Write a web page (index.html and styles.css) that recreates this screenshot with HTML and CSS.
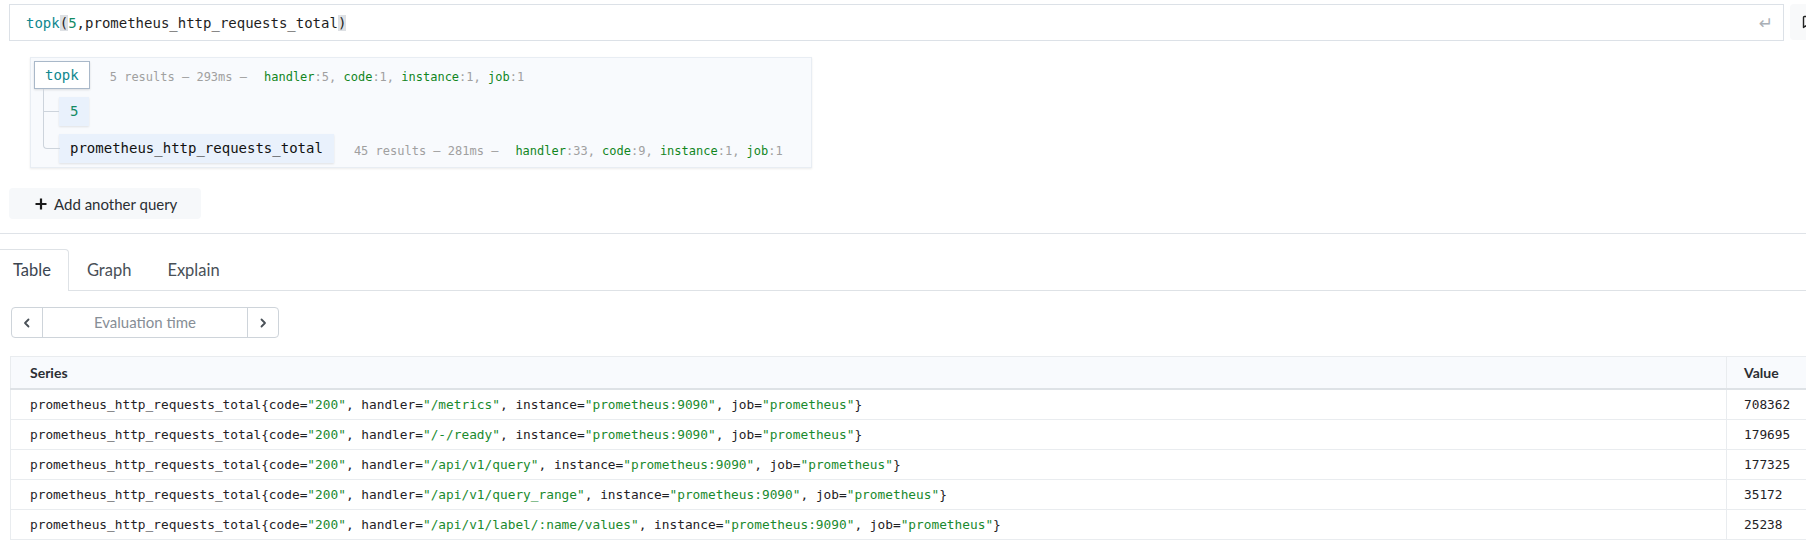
FILE: index.html
```html
<!DOCTYPE html>
<html>
<head>
<meta charset="utf-8">
<link rel="stylesheet" href="styles.css">
</head>
<body>
<div class="page">
  <section class="top">
    <div class="query-row">
      <div class="query-input">
        <span class="q-fn">topk</span><span class="q-brk">(</span><span class="q-num">5</span><span class="q-plain">,prometheus_http_requests_total</span><span class="q-brk">)</span>
        <span class="q-enter">↵</span>
      </div>
      <div class="side-btn">
        <svg width="16" height="16" viewBox="0 0 16 16"><path d="M12 2.5H4.5a1 1 0 0 0-1 1v10l2-1.6 2 1.6" fill="none" stroke="#222" stroke-width="1.4" stroke-linejoin="round"/></svg>
      </div>
    </div>

    <div class="tree">
      <div class="node-row">
        <span class="node node-root">topk</span>
        <span class="info">5 results – 293ms –<span class="labels"><span class="ln">handler</span>:5, <span class="ln">code</span>:1, <span class="ln">instance</span>:1, <span class="ln">job</span>:1</span></span>
      </div>
      <div class="children">
        <div class="child">
          <span class="node node-leaf num">5</span>
        </div>
        <div class="child last">
          <span class="node node-leaf">prometheus_http_requests_total</span>
          <span class="info">45 results – 281ms –<span class="labels"><span class="ln">handler</span>:33, <span class="ln">code</span>:9, <span class="ln">instance</span>:1, <span class="ln">job</span>:1</span></span>
        </div>
      </div>
    </div>

    <button class="add-btn"><svg width="12" height="12" viewBox="0 0 12 12"><path d="M6 0.5v11M0.5 6h11" stroke="#1b1b1b" stroke-width="2.2"/></svg><span>Add another query</span></button>
  </section>

  <hr class="sep">

  <section class="bottom">
    <div class="tabs">
      <div class="tab active">Table</div>
      <div class="tab">Graph</div>
      <div class="tab">Explain</div>
    </div>

    <div class="eval">
      <div class="eval-btn"><svg width="12" height="12" viewBox="0 0 12 12"><path d="M7.5 2.5L4 6l3.5 3.5" fill="none" stroke="#495057" stroke-width="1.8" stroke-linecap="round" stroke-linejoin="round"/></svg></div>
      <div class="eval-field">Evaluation time</div>
      <div class="eval-btn"><svg width="12" height="12" viewBox="0 0 12 12"><path d="M4.5 2.5L8 6l-3.5 3.5" fill="none" stroke="#495057" stroke-width="1.8" stroke-linecap="round" stroke-linejoin="round"/></svg></div>
    </div>

    <table class="results">
      <thead>
        <tr><th class="c-series">Series</th><th class="c-value">Value</th></tr>
      </thead>
      <tbody>
        <tr><td class="c-series">prometheus_http_requests_total{code=<span class="lv">"200"</span>, handler=<span class="lv">"/metrics"</span>, instance=<span class="lv">"prometheus:9090"</span>, job=<span class="lv">"prometheus"</span>}</td><td class="c-value">708362</td></tr>
        <tr><td class="c-series">prometheus_http_requests_total{code=<span class="lv">"200"</span>, handler=<span class="lv">"/-/ready"</span>, instance=<span class="lv">"prometheus:9090"</span>, job=<span class="lv">"prometheus"</span>}</td><td class="c-value">179695</td></tr>
        <tr><td class="c-series">prometheus_http_requests_total{code=<span class="lv">"200"</span>, handler=<span class="lv">"/api/v1/query"</span>, instance=<span class="lv">"prometheus:9090"</span>, job=<span class="lv">"prometheus"</span>}</td><td class="c-value">177325</td></tr>
        <tr><td class="c-series">prometheus_http_requests_total{code=<span class="lv">"200"</span>, handler=<span class="lv">"/api/v1/query_range"</span>, instance=<span class="lv">"prometheus:9090"</span>, job=<span class="lv">"prometheus"</span>}</td><td class="c-value">35172</td></tr>
        <tr><td class="c-series">prometheus_http_requests_total{code=<span class="lv">"200"</span>, handler=<span class="lv">"/api/v1/label/:name/values"</span>, instance=<span class="lv">"prometheus:9090"</span>, job=<span class="lv">"prometheus"</span>}</td><td class="c-value">25238</td></tr>
      </tbody>
    </table>
  </section>
</div>
</body>
</html>
```

FILE: styles.css
```css
html, body {
  margin: 0;
  padding: 0;
  background: #fff;
  overflow: hidden;
}
body {
  font-family: Lato, "Noto Sans", sans-serif;
  color: #343a40;
}
.page {
  width: 1830px;
}
.top {
  padding: 4px 0 0 9px;
}
.query-row {
  display: flex;
  gap: 6px;
  width: 1817px;
}
.query-input {
  flex: 1;
  height: 35px;
  border: 1px solid #dce1e7;
  display: flex;
  align-items: center;
  padding-left: 16px;
  padding-right: 10px;
  font-family: "DejaVu Sans Mono", monospace;
  font-size: 14px;
  color: #1e1e1e;
  white-space: pre;
}
.q-fn { color: #11888f; }
.q-num { color: #138a64; }
.q-brk { background: #dde0e4; }
.q-enter {
  margin-left: auto;
  color: #a9afb6;
  font-family: "DejaVu Sans", sans-serif;
  font-size: 17px;
  margin-right: 0;
}
.side-btn {
  width: 36px;
  height: 36px;
  background: #f8f9fa;
  border-radius: 4px;
  display: flex;
  align-items: center;
  justify-content: center;
}
.tree {
  margin: 16px 0 0 21px;
  width: 774px;
  padding: 3px 3px 4px 3px;
  border: 1px solid #e8edf3;
  background: #f8fafd;
  box-shadow: 0 1px 2px rgba(0,0,0,0.08);
  font-family: "DejaVu Sans Mono", monospace;
}
.node-row, .child {
  display: flex;
  align-items: center;
}
.node {
  font-size: 14px;
  white-space: pre;
}
.node-root {
  height: 26px;
  line-height: 26px;
  padding: 0 10px;
  border: 1px solid #a9b8c9;
  background: #fff;
  color: #11888f;
  box-shadow: 0 1px 2px rgba(0,0,0,0.12);
}
.node-leaf {
  height: 29px;
  line-height: 29px;
  padding: 0 11px;
  background: #e9f1fc;
  color: #111;
  box-shadow: 0 1px 2px rgba(0,0,0,0.1);
}
.node-leaf.num {
  color: #138a64;
  padding: 0 11px;
}
.info {
  margin-left: 20px;
  padding-top: 4px;
  font-size: 12px;
  color: #a0a0a0;
  white-space: pre;
}
.labels {
  margin-left: 17px;
}
.ln { color: #11861d; }
.children {
  margin-left: 9px;
}
.child {
  position: relative;
  padding-top: 8px;
  padding-left: 16px;
}
.child::before {
  content: "";
  position: absolute;
  left: 0;
  top: 0;
  bottom: 0;
  border-left: 1px solid #cdd4dc;
}
.child::after {
  content: "";
  position: absolute;
  left: 0;
  top: 22px;
  width: 16px;
  border-top: 1px solid #cdd4dc;
}
.child.last::before {
  bottom: auto;
  height: 22px;
  width: 16px;
  border-bottom: 1px solid #cdd4dc;
  border-bottom-left-radius: 4px;
}
.child.last::after {
  display: none;
}
.add-btn {
  margin-top: 20px;
  width: 192px;
  height: 31px;
  border: none;
  border-radius: 4px;
  background: #f6f8fa;
  display: flex;
  align-items: center;
  gap: 7px;
  padding: 0 0 0 26px;
  font-family: Lato, "Noto Sans", sans-serif;
  font-size: 15px;
  color: #2b2f33;
}
.sep {
  margin: 14px 0 0 0;
  border: none;
  border-top: 1px solid #dfe3e8;
  height: 0;
}
.bottom {
  padding: 15px 0 0 10px;
}
.tabs {
  display: flex;
  margin-left: -15px;
  border-bottom: 1px solid #dee2e6;
  width: 1830px;
}
.tab {
  height: 40px;
  line-height: 40px;
  padding: 0 17px;
  font-size: 16.5px;
  color: #495057;
  border: 1px solid transparent;
  border-bottom: none;
  border-radius: 4px 4px 0 0;
  margin-bottom: -1px;
}
.tab.active {
  border-color: #dee2e6;
  background: #fff;
  height: 41px;
  line-height: 40px;
  color: #3b4550;
}
.eval {
  margin: 16px 0 0 1px;
  display: flex;
  width: 268px;
  height: 31px;
  border: 1px solid #ced4da;
  border-radius: 4px;
  box-sizing: border-box;
}
.eval-btn {
  width: 30px;
  display: flex;
  align-items: center;
  justify-content: center;
}
.eval-field {
  flex: 1;
  border-left: 1px solid #ced4da;
  border-right: 1px solid #ced4da;
  text-align: center;
  line-height: 29px;
  font-size: 15px;
  color: #868e96;
}
.results {
  margin-top: 18px;
  width: 1816px;
  border-collapse: collapse;
  border: 1px solid #e9ecef;
}
.results th {
  height: 31px;
  background: #f8fafd;
  border-bottom: 2px solid #dee2e6;
  text-align: left;
  font-size: 14px;
  font-weight: 700;
  color: #2c2e33;
  padding: 0 19px;
}
.results td {
  height: 29px;
  border-bottom: 1px solid #e9ecef;
  padding: 0 19px;
  font-family: "DejaVu Sans Mono", monospace;
  font-size: 12.8px;
  color: #1f2226;
  white-space: pre;
}
.results .c-value {
  width: 62px;
  border-left: 1px solid #e9ecef;
  padding-left: 17px;
}
.lv { color: #1a8a2e; }
```
